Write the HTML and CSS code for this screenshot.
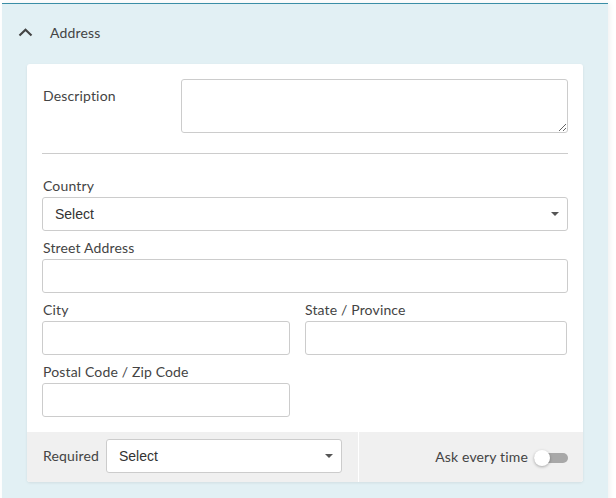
FILE: index.html
```html
<!DOCTYPE html>
<html>
<head>
<meta charset="utf-8">
<link rel="stylesheet" href="styles.css">
</head>
<body>
<div class="panel">
  <div class="panel-header">
    <svg class="chevron" width="15" height="9" viewBox="0 0 15 9"><polyline points="1.5,7.5 7.5,1.8 13.5,7.5" fill="none" stroke="#444" stroke-width="2.2"/></svg>
    <span class="panel-title">Address</span>
  </div>
  <div class="card">
    <div class="card-body">
      <div class="desc-row">
        <label class="desc-label">Description</label>
        <textarea class="desc-input"></textarea>
      </div>
      <div class="divider"></div>
      <div class="field">
        <label class="label">Country</label>
        <div class="select"><span>Select</span><span class="caret"></span></div>
      </div>
      <div class="field">
        <label class="label">Street Address</label>
        <div class="input"></div>
      </div>
      <div class="field-row">
        <div class="field">
          <label class="label">City</label>
          <div class="input"></div>
        </div>
        <div class="field">
          <label class="label">State / Province</label>
          <div class="input"></div>
        </div>
      </div>
      <div class="field-row">
        <div class="field">
          <label class="label">Postal Code / Zip Code</label>
          <div class="input"></div>
        </div>
        <div></div>
      </div>
    </div>
    <div class="card-footer">
      <div class="footer-left">
        <span class="label-inline">Required</span>
        <div class="select footer-select"><span>Select</span><span class="caret"></span></div>
      </div>
      <div class="footer-right">
        <span class="label-inline">Ask every time</span>
        <span class="toggle"><span class="knob"></span></span>
      </div>
    </div>
  </div>
</div>
</body>
</html>
```

FILE: styles.css
```css
* { box-sizing: border-box; }
html, body { margin: 0; padding: 0; background: #fff; }
body {
  font-family: Lato, "Liberation Sans", sans-serif;
  color: #444;
  font-size: 14px;
  letter-spacing: 0.15px;
  padding: 2px 8px 0 2px;
  height: 498px;
  overflow: hidden;
}
.panel {
  width: 606px;
  background: #e2f0f4;
  border-top: 1px solid #3a8ea6;
  margin-top: 1px;
  padding-bottom: 30px;
  box-shadow: 2px 0 5px rgba(0,0,0,0.06);
}
.panel-header {
  height: 60px;
  display: flex;
  align-items: center;
  padding-left: 16px;
  padding-bottom: 4px;
}
.chevron { display: block; margin-right: 17px; }
.panel-title { color: #444; }
.card {
  margin: 0 25px;
  background: #fff;
  border-radius: 3px;
  box-shadow: 0 1px 3px rgba(0,0,0,0.08);
  overflow: hidden;
}
.card-body { padding: 15px; }
.desc-row { display: flex; }
.desc-label { width: 139px; padding: 8px 0 0 1px; line-height: 18px; }
.desc-input {
  flex: 1;
  height: 54px;
  border: 1px solid #ccc;
  border-radius: 3px;
  margin: 0;
  padding: 6px;
  font-family: inherit;
  display: block;
}
.divider { height: 1px; background: #ccc; margin: 20px 0 23px 0; }
.field { margin-bottom: 8px; }
.label { display: block; line-height: 18px; margin-bottom: 2px; padding-left: 1px; }
.input {
  height: 34px;
  border: 1px solid #ccc;
  border-radius: 3px;
  background: #fff;
}
.field-row {
  display: grid;
  grid-template-columns: 248px 262px;
  column-gap: 15px;
}
.field-row .field + .field .label { padding-left: 0; }
.field-row:last-child .field { margin-bottom: 0; }
.select {
  height: 34px;
  border: 1px solid #ccc;
  border-radius: 3px;
  background: #fff;
  display: flex;
  align-items: center;
  justify-content: space-between;
  padding: 0 8px 0 12px;
  font-family: "Liberation Sans", Arial, sans-serif;
  font-size: 14px;
  letter-spacing: 0;
  color: #333;
}
.caret {
  width: 0; height: 0;
  border-left: 4px solid transparent;
  border-right: 4px solid transparent;
  border-top: 4px solid #555;
}
.card-footer {
  display: flex;
  height: 50px;
  background: #f0f0f0;
}
.footer-left {
  width: 332px;
  display: flex;
  align-items: center;
  padding-left: 16px;
  padding-bottom: 2px;
  border-right: 1px solid #fff;
}
.label-inline { line-height: 18px; }
.footer-select { width: 236px; margin-left: 7px; }
.footer-right {
  flex: 1;
  display: flex;
  align-items: center;
  justify-content: flex-end;
  padding-right: 15px;
}
.toggle {
  position: relative;
  width: 34px;
  height: 10px;
  margin-left: 6px;
  background: #a8a8a8;
  border-radius: 5px;
  margin-top: 1px;
}
.knob {
  position: absolute;
  left: 0;
  top: -3px;
  width: 16px;
  height: 16px;
  border-radius: 50%;
  background: #fff;
  box-shadow: 0 1px 3px rgba(0,0,0,0.3);
}
```
